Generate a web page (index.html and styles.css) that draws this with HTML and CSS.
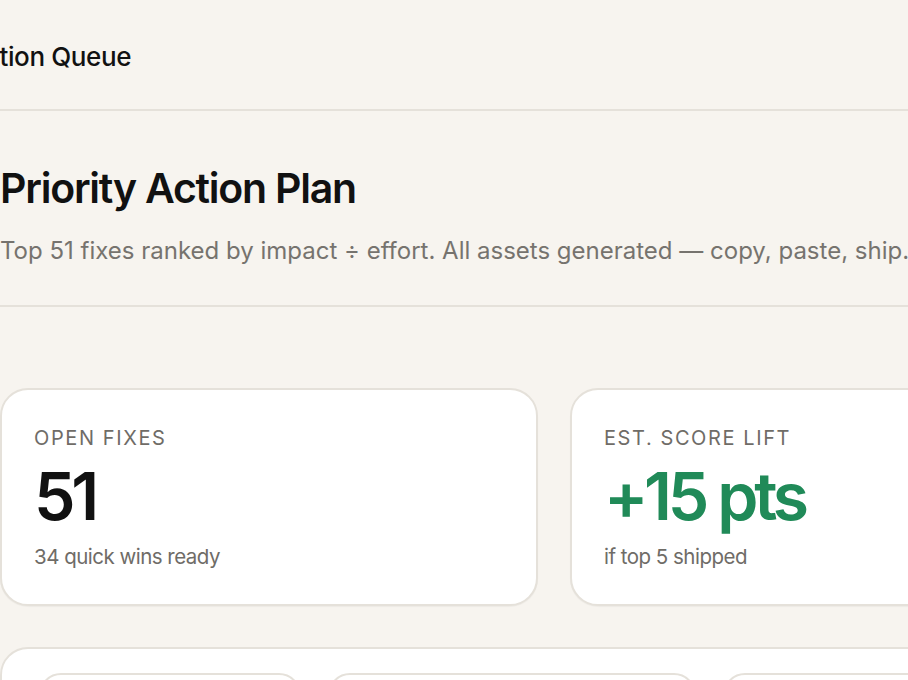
FILE: index.html
```html
<!DOCTYPE html>
<html lang="en">
<head>
<meta charset="utf-8">
<title>Action Queue</title>
<link rel="stylesheet" href="styles.css">
</head>
<body>
<div class="page">
  <header class="topbar">
    <h1 class="topbar-title">Action Queue</h1>
  </header>
  <section class="intro">
    <h2 class="intro-title">Priority Action Plan</h2>
    <p class="intro-sub">Top 51 fixes ranked by impact ÷ effort. All assets generated — copy, paste, ship.</p>
  </section>
  <section class="stats">
    <div class="stat-card">
      <div class="stat-label">OPEN FIXES</div>
      <div class="stat-value">51</div>
      <div class="stat-note">34 quick wins ready</div>
    </div>
    <div class="stat-card">
      <div class="stat-label">EST. SCORE LIFT</div>
      <div class="stat-value green">+15 pts</div>
      <div class="stat-note">if top 5 shipped</div>
    </div>
  </section>
  <section class="filters">
    <div class="pill pill-a"></div>
    <div class="pill pill-b"></div>
    <div class="pill pill-c"></div>
  </section>
</div>
</body>
</html>
```

FILE: styles.css
```css
html, body {
  margin: 0;
  padding: 0;
  background: #f7f4ef;
  overflow: hidden;
}
body {
  width: 908px;
  height: 680px;
  font-family: Inter, "Noto Sans", sans-serif;
  color: #111;
}
.page {
  width: 1200px;
}
.topbar {
  height: 109px;
  border-bottom: 2px solid #e5e1da;
  display: flex;
  align-items: center;
}
.topbar-title {
  margin: 4px 0 0 -33px;
  font-size: 26px;
  font-weight: 500;
  letter-spacing: -0.015em;
}
.intro {
  padding: 52px 0 0;
  border-bottom: 2px solid #e5e1da;
  height: 196px;
  box-sizing: border-box;
  width: 100%;
}
.intro-title {
  margin: 0;
  font-size: 41px;
  font-weight: 600;
  letter-spacing: -0.03em;
  line-height: 50px;
}
.intro-sub {
  margin: 22px 0 0;
  font-size: 24px;
  line-height: 32px;
  color: #76736e;
  letter-spacing: 0;
}
.stats {
  display: grid;
  grid-template-columns: 538px 538px;
  gap: 32px;
  padding-top: 81px;
}
.stat-card {
  background: #fff;
  border: 2px solid #e5e1da;
  border-radius: 28px;
  height: 218px;
  box-sizing: border-box;
  padding: 36px 32px 0;
  box-shadow: 0 1px 1px rgba(0,0,0,0.04);
}
.stat-label {
  font-size: 20px;
  letter-spacing: 0.08em;
  color: #6f6c67;
  line-height: 24px;
}
.stat-value {
  font-size: 66px;
  font-weight: 600;
  letter-spacing: -0.065em;
  line-height: 72px;
  margin-top: 10px;
}
.stat-value.green {
  color: #208a58;
}
.stat-note {
  font-size: 20.5px;
  color: #6f6c67;
  line-height: 28px;
  margin-top: 11px;
  letter-spacing: -0.025em;
}
.filters {
  margin-top: 41px;
  background: #fff;
  border: 2px solid #e5e1da;
  border-radius: 28px;
  height: 200px;
  box-sizing: border-box;
  padding: 24px 37px;
  display: flex;
  gap: 27px;
}
.pill {
  height: 60px;
  border: 2px solid #e5e1da;
  border-radius: 22px;
  box-sizing: border-box;
}
.pill-a { width: 262px; }
.pill-b { width: 368px; }
.pill-c { width: 300px; }
```
